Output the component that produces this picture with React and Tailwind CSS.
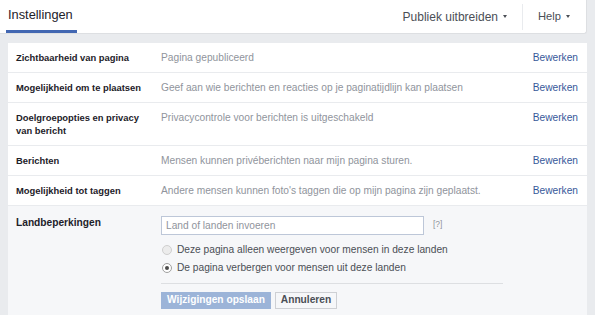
import React from 'react'

const rows = [
  { label: 'Zichtbaarheid van pagina', value: 'Pagina gepubliceerd' },
  { label: 'Mogelijkheid om te plaatsen', value: 'Geef aan wie berichten en reacties op je paginatijdlijn kan plaatsen' },
  { label: 'Doelgroepopties en privacy van bericht', value: 'Privacycontrole voor berichten is uitgeschakeld' },
  { label: 'Berichten', value: 'Mensen kunnen privéberichten naar mijn pagina sturen.' },
  { label: 'Mogelijkheid tot taggen', value: 'Andere mensen kunnen foto\'s taggen die op mijn pagina zijn geplaatst.' },
]

function Caret() {
  return (
    <span className="inline-block ml-[5px] w-0 h-0 border-x-[2px] border-x-transparent border-t-[3px] border-t-[#4b4f56] align-middle" />
  )
}

function Radio({ checked, label }) {
  return (
    <label className="flex items-center h-[18px] gap-[5px]">
      <span
        className={
          checked
            ? 'ml-[1px] w-[10px] h-[10px] rounded-full border border-[#a0a0a0] bg-white flex items-center justify-center'
            : 'ml-[1px] w-[10px] h-[10px] rounded-full border border-[#cfcfcf] bg-[#ececec]'
        }
      >
        {checked && <span className="w-[4px] h-[4px] rounded-full bg-[#4b4b4b]" />}
      </span>
      <span className="text-[10.2px] text-[#4b4f56]">{label}</span>
    </label>
  )
}

export default function App() {
  return (
    <div className="w-[595px] h-[315px] overflow-hidden bg-[#e9ebee] font-['Liberation_Sans',Arial,sans-serif]">
      {/* Header */}
      <div className="flex w-[587px] h-[34px] bg-white border-b border-r border-[#dddfe2] rounded-br-[3px]">
        <div className="ml-[6px] w-[71px] pl-[2px] flex items-center border-b-[3px] border-[#4267b2] text-[12.8px] text-[#1d2129]">
          Instellingen
        </div>
        <div className="ml-auto flex items-center text-[12px] text-[#4b4f56]">
          <span className="flex items-center">
            Publiek uitbreiden
            <Caret />
          </span>
          <span className="mx-[15px] w-px h-[26px] bg-[#e9ebee]" />
          <span className="flex items-center mr-[16px] text-[11.2px]">
            Help
            <Caret />
          </span>
        </div>
      </div>

      {/* Settings card */}
      <div className="ml-[8px] mt-[9px] w-[579px] bg-white">
        {rows.map((r) => (
          <div key={r.label} className="flex px-[8px] py-[8px] leading-[13px] border-b border-[#e9ebee]">
            <div className="w-[145px] shrink-0 pr-[10px] text-[9.4px] font-bold text-[#1d2129]">{r.label}</div>
            <div className="flex-1 text-[10.2px] text-[#90949c]">{r.value}</div>
            <div className="pr-[1px] text-[10.2px] text-[#365899]">Bewerken</div>
          </div>
        ))}

        {/* Expanded row */}
        <div className="flex px-[8px] pt-[10px] pb-[12px] bg-[#f6f7f9]">
          <div className="w-[145px] shrink-0 text-[10.2px] leading-[13px] font-bold text-[#1d2129]">Landbeperkingen</div>
          <div className="flex flex-col">
            <div className="flex items-start">
              <div className="w-[263px] h-[19px] bg-white border border-[#bdc7d8] px-[4px] flex items-center text-[10.2px] text-[#90949c]">
                Land of landen invoeren
              </div>
              <span className="ml-[9px] mt-[2px] text-[8.5px] text-[#90949c]">[?]</span>
            </div>
            <div className="mt-[6px]">
              <Radio label="Deze pagina alleen weergeven voor mensen in deze landen" />
              <Radio checked label="De pagina verbergen voor mensen uit deze landen" />
            </div>
            <div className="mt-[6px] w-[342px] border-t border-[#dddfe2]" />
            <div className="mt-[8px] flex gap-[4px]">
              <button className="w-[110px] h-[17px] bg-[#9cb4d8] border border-[#9cb4d8] text-white text-[10.2px] font-bold leading-none">
                Wijzigingen opslaan
              </button>
              <button className="w-[62px] h-[17px] bg-[#f6f7f9] border border-[#ced0d4] text-[#4b4f56] text-[10.2px] font-bold leading-none">
                Annuleren
              </button>
            </div>
          </div>
        </div>
      </div>
    </div>
  )
}
